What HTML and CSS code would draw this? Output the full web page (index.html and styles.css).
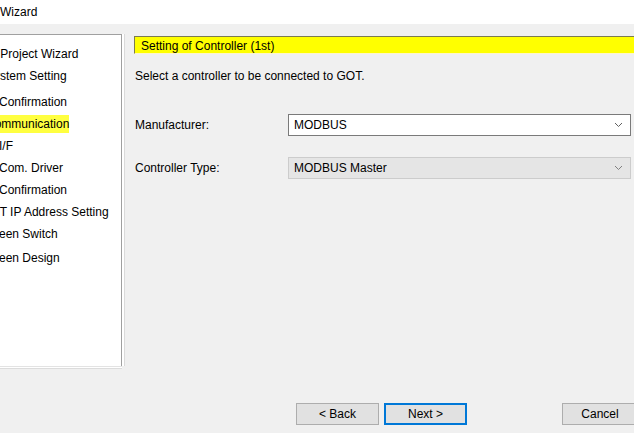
FILE: index.html
```html
<!DOCTYPE html>
<html lang="en">
<head>
<meta charset="utf-8">
<title>Wizard</title>
<link rel="stylesheet" href="styles.css">
</head>
<body>
<div class="window">
  <div class="titlebar">Wizard</div>
  <div class="main">
    <div class="steps">
      <ul class="tree">
        <li class="lvl0">New Project Wizard</li>
        <li class="group">System Setting</li>
        <li class="lvl2 gap">Confirmation</li>
        <li class="group"><span class="current">Communication</span></li>
        <li class="lvl2">I/F</li>
        <li class="lvl2">Com. Driver</li>
        <li class="lvl2">Confirmation</li>
        <li class="lvl1">GOT IP Address Setting</li>
        <li class="lvl1">Screen Switch</li>
        <li class="lvl1 last">Screen Design</li>
      </ul>
    </div>
    <div class="page">
      <div class="page-title">Setting of Controller (1st)</div>
      <p class="intro">Select a controller to be connected to GOT.</p>
      <div class="field">
        <label class="field-label">Manufacturer:</label>
        <div class="combo">
          <span class="combo-value">MODBUS</span>
          <svg class="chevron" width="9" height="6" viewBox="0 0 9 6"><path d="M1 1 L4.5 4.5 L8 1" fill="none" stroke="#606060" stroke-width="1"/></svg>
        </div>
      </div>
      <div class="field">
        <label class="field-label">Controller Type:</label>
        <div class="combo disabled">
          <span class="combo-value">MODBUS Master</span>
          <svg class="chevron" width="9" height="6" viewBox="0 0 9 6"><path d="M1 1 L4.5 4.5 L8 1" fill="none" stroke="#808080" stroke-width="1"/></svg>
        </div>
      </div>
    </div>
  </div>
  <div class="buttons">
    <button class="btn">&lt; Back</button>
    <button class="btn default">Next &gt;</button>
    <button class="btn cancel">Cancel</button>
  </div>
</div>
</body>
</html>
```

FILE: styles.css
```css
html, body {
  margin: 0;
  padding: 0;
}

body {
  width: 634px;
  height: 433px;
  overflow: hidden;
  background: #f0f0f0;
  font-family: "Liberation Sans", Arial, sans-serif;
  font-size: 12px;
  color: #000;
}

.window {
  display: flex;
  flex-direction: column;
  height: 433px;
}

.titlebar {
  height: 24px;
  line-height: 24px;
  background: #fff;
  padding-left: 0;
  white-space: nowrap;
  color: #000;
}

.main {
  display: flex;
  height: 355px;
  flex-shrink: 0;
}

.steps {
  margin-top: 10px;
  width: 121px;
  height: 331px;
  background: #fff;
  border-top: 1px solid #a0a0a0;
  border-right: 1px solid #a0a0a0;
  box-shadow: 2px 0 0 #fff, 3px 0 0 #dadada, 0 1px 0 #e3e3e3, 0 2px 0 #fff, 0 3px 0 #dcdcdc;
  overflow: hidden;
  flex-shrink: 0;
}

.tree {
  list-style: none;
  margin: 8px 0 0 -27px;
  padding: 0;
  white-space: nowrap;
}

.tree li {
  height: 22px;
  line-height: 22px;
}

.tree li.gap {
  padding-top: 4px;
}

.tree li.last {
  padding-top: 2px;
}

.lvl0 { padding-left: 0; }
.group { padding-left: 13px; }
.lvl1 { padding-left: 8px; }
.lvl2 { padding-left: 26px; }

.current {
  background: #ffff40;
  padding: 2px 0;
}

.page {
  flex: 1;
  padding: 12px 0 0 12px;
  min-width: 0;
}

.page-title {
  margin-right: -4px;
  height: 14px;
  line-height: 14px;
  padding-top: 2px;
  background: #ffff00;
  border-top: 1px solid #7c7c50;
  border-left: 1px solid #7c7c50;
  border-bottom: 1px solid #fff6c8;
  padding-left: 6px;
  white-space: nowrap;
}

.intro {
  margin: 14px 0 0 1px;
  height: 16px;
  line-height: 16px;
}

.field {
  display: flex;
  align-items: center;
  margin-top: 30px;
}

.field + .field {
  margin-top: 21px;
}

.field-label {
  width: 153px;
  padding-left: 1px;
}

.combo {
  height: 20px;
  border: 1px solid #7a7a7a;
  background: #fff;
  display: flex;
  align-items: center;
  justify-content: space-between;
  padding: 0 7px 0 5px;
  box-sizing: content-box;
  width: 329px;
}

.combo.disabled {
  background: #e5e5e5;
  border-color: #cccccc;
}

.combo-value {
  line-height: 20px;
}

.chevron {
  display: block;
}

.buttons {
  display: flex;
  align-items: flex-start;
  height: 54px;
  padding-left: 296px;
  padding-top: 24px;
  box-sizing: border-box;
}

.btn {
  font-family: inherit;
  font-size: 12px;
  color: #000;
  width: 83px;
  height: 22px;
  background: #e1e1e1;
  border: 1px solid #adadad;
  padding: 0;
  margin: 0;
  flex-shrink: 0;
}

.btn.default {
  margin-left: 5px;
  border: 2px solid #0078d7;
}

.btn.cancel {
  margin-left: 95px;
  width: 76px;
}
```
